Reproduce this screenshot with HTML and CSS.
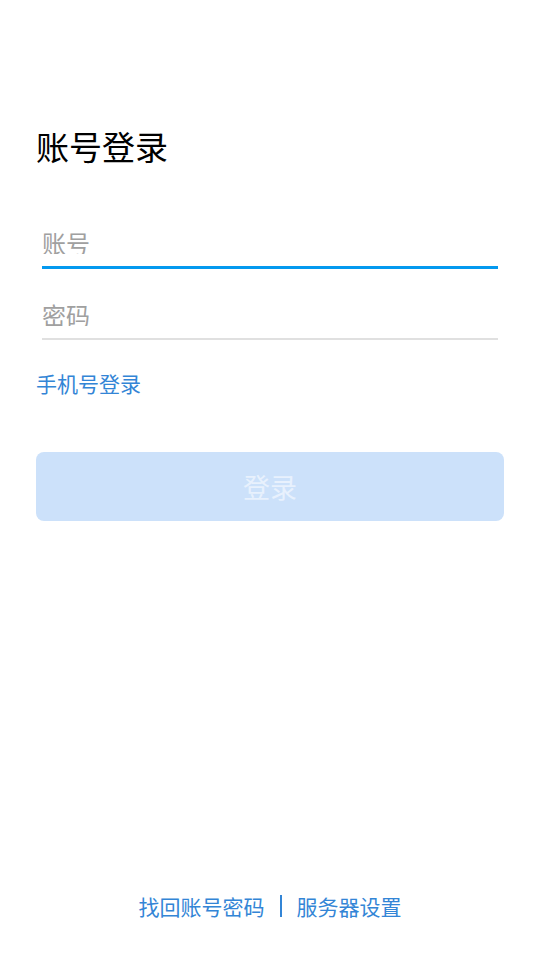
FILE: index.html
```html
<!DOCTYPE html>
<html lang="zh-CN">
<head>
<meta charset="utf-8">
<meta name="viewport" content="width=540">
<title>账号登录</title>
<link rel="stylesheet" href="styles.css">
</head>
<body>
<div class="page">
  <main class="content">
    <h1 class="title">账号登录</h1>
    <div class="field field-active">
      <input class="input" type="text" placeholder="账号">
    </div>
    <div class="field">
      <input class="input" type="password" placeholder="密码">
    </div>
    <a class="link" href="#">手机号登录</a>
    <button class="btn" type="button" disabled>登录</button>
  </main>
  <footer class="footer">
    <a class="link footer-link" href="#">找回账号密码</a>
    <span class="sep"></span>
    <a class="link footer-link" href="#">服务器设置</a>
  </footer>
</div>
</body>
</html>
```
FILE: styles.css
```css
html, body {
  margin: 0;
  padding: 0;
  background: #ffffff;
}
body {
  font-family: "Noto Sans CJK SC", "Noto Sans", sans-serif;
}
.page {
  display: flex;
  flex-direction: column;
  min-height: 960px;
  box-sizing: border-box;
}
.content {
  display: flex;
  flex-direction: column;
  padding: 0 36px;
}
.title {
  margin: 130px 0 0 0;
  font-size: 33px;
  line-height: 33px;
  font-weight: 400;
  color: #000000;
}
.field {
  margin: 0 6px;
  border-bottom: 2px solid #e0e0e0;
  padding: 0 0 12px 0;
}
.field-active {
  margin-top: 67px;
  border-bottom: 3px solid #0399ef;
  padding-bottom: 12px;
}
.field + .field {
  padding-top: 33px;
}
.input {
  display: block;
  width: 100%;
  border: none;
  outline: none;
  padding: 0;
  margin: 0;
  background: transparent;
  font-family: inherit;
  font-size: 24px;
  line-height: 24px;
  height: 24px;
  color: #333;
}
.input::placeholder {
  color: #a0a0a0;
}
.link {
  display: block;
  margin-top: 33px;
  font-size: 21px;
  line-height: 21px;
  color: #3385d6;
  text-decoration: none;
}
.btn {
  margin-top: 58px;
  height: 69px;
  border: none;
  border-radius: 8px;
  background: #cce1fa;
  color: #e8f1fd;
  font-family: inherit;
  font-size: 27px;
  padding: 0;
}
.footer {
  margin-top: auto;
  display: flex;
  justify-content: center;
  align-items: center;
  padding-bottom: 43px;
}
.footer-link {
  margin-top: 0;
}
.sep {
  width: 2px;
  height: 22px;
  background: #3385d6;
  margin: 0 15px;
}
```
